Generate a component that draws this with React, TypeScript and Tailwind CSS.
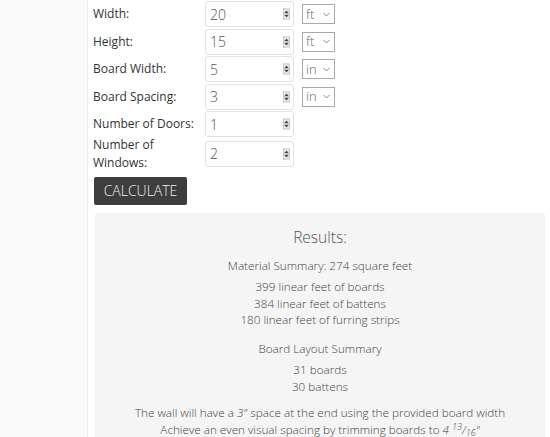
import React from "react";

function Spinner() {
  return (
    <div className="absolute right-[3px] top-1/2 -translate-y-1/2 w-[7px] h-[11px] bg-[#ececec] border border-[#c8c8c8] flex flex-col items-center justify-center gap-[1px]">
      <svg width="5" height="3" viewBox="0 0 5 3"><path d="M2.5 0 L5 3 L0 3 Z" fill="#444" /></svg>
      <svg width="5" height="3" viewBox="0 0 5 3"><path d="M0 0 L5 0 L2.5 3 Z" fill="#444" /></svg>
    </div>
  );
}

function NumInput({ value }: { value: string }) {
  return (
    <div className="relative w-[89px] h-[26px] border border-[#e3e3e3] rounded-[3px] bg-white flex items-center pl-[4px] text-[14px] font-light text-[#555]">
      {value}
      <Spinner />
    </div>
  );
}

function Select({ value }: { value: string }) {
  return (
    <div className="ml-[8px] w-[33px] h-[20px] border border-[#a9a9a9] bg-white flex items-center justify-between pl-[3px] pr-[4px] text-[13px] font-light text-[#666]">
      <span className="leading-none">{value}</span>
      <svg width="7" height="5" viewBox="0 0 7 5"><path d="M0.5 1 L3.5 4 L6.5 1" fill="none" stroke="#888" strokeWidth="1" /></svg>
    </div>
  );
}

function Row({ label, value, unit, tall }: { label: React.ReactNode; value: string; unit?: string; tall?: boolean }) {
  return (
    <div className={`flex items-center ${tall ? "h-[30px]" : "h-[26px] mb-[1.5px]"}`}>
      <div className="w-[112px] text-[12px] leading-[18px] text-[#333]">{label}</div>
      <NumInput value={value} />
      {unit && <Select value={unit} />}
    </div>
  );
}

export default function App() {
  return (
    <div className="flex w-[550px] h-[437px] overflow-hidden bg-white" style={{ fontFamily: '"Open Sans", sans-serif' }}>
      <div className="w-[88px] shrink-0 bg-[#f9f9f9] border-r border-[#ececec]" />
      <div className="flex-1 pl-[5px] pt-[1px]">
        <Row label="Width:" value="20" unit="ft" />
        <Row label="Height:" value="15" unit="ft" />
        <Row label="Board Width:" value="5" unit="in" />
        <Row label="Board Spacing:" value="3" unit="in" />
        <Row label="Number of Doors:" value="1" />
        <Row label={<>Number of<br />Windows:</>} value="2" tall />
        <button className="mt-[8px] ml-[1px] w-[93px] h-[28px] bg-[#3e3e3e] rounded-[2px] text-[#f0f0f0] text-[14px] font-light uppercase flex items-center justify-center">
          Calculate
        </button>
        <div className="mt-[8px] ml-[2px] w-[450px] h-[240px] bg-[#f5f5f5] rounded-[2px] text-center text-[#444] text-[11.7px] font-light leading-[16.5px] pt-[12px]">
          <div className="text-[15.5px] font-light text-[#555] leading-[24px] mb-[8px]">Results:</div>
          <p className="mb-[5px]">Material Summary: 274 square feet</p>
          <p>399 linear feet of boards</p>
          <p>384 linear feet of battens</p>
          <p className="mb-[12px]">180 linear feet of furring strips</p>
          <p className="mb-[5px]">Board Layout Summary</p>
          <p>31 boards</p>
          <p className="mb-[10px]">30 battens</p>
          <p>The wall will have a <i>3"</i> space at the end using the provided board width</p>
          <p>
            Achieve an even visual spacing by trimming boards to{" "}
            <i>
              4 <span className="relative top-[-4px] text-[9px]">13</span>/<span className="relative top-[2px] text-[9px]">16</span>"
            </i>
          </p>
        </div>
      </div>
    </div>
  );
}
